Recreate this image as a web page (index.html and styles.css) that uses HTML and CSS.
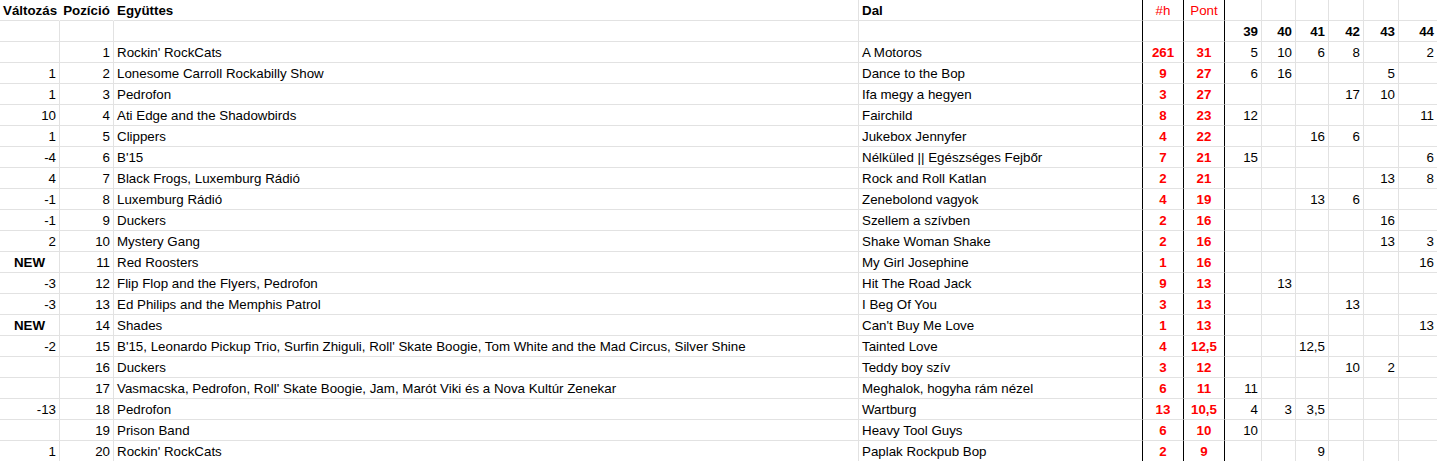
FILE: index.html
```html
<!DOCTYPE html>
<html lang="hu">
<head>
<meta charset="utf-8">
<title>Toplista</title>
<link rel="stylesheet" href="styles.css">
</head>
<body>
<table class="sheet">
  <colgroup>
    <col class="w-chg"><col class="w-pos"><col class="w-band"><col class="w-song">
    <col class="w-h"><col class="w-pont">
    <col class="w-39"><col class="w-40"><col class="w-41"><col class="w-42"><col class="w-43"><col class="w-44">
  </colgroup>
  <thead>
    <tr class="head">
      <th class="c nob">Változás</th>
      <th class="c nob">Pozíció</th>
      <th class="l">Együttes</th>
      <th class="l thick">Dal</th>
      <th class="red thin thick">#h</th>
      <th class="red thin thick">Pont</th>
      <th></th><th></th><th></th><th></th><th></th><th class="last"></th>
    </tr>
    <tr>
      <td></td><td></td><td></td><td class="thick"></td><td class="thick"></td><td class="thick"></td>
      <th class="r">39</th><th class="r">40</th><th class="r">41</th><th class="r">42</th><th class="r">43</th><th class="r last">44</th>
    </tr>
  </thead>
  <tbody>
    <tr><td class="r"></td><td class="r">1</td><td>Rockin' RockCats</td><td class="thick">A Motoros</td><td class="pt thick">261</td><td class="pt thick">31</td><td class="r">5</td><td class="r">10</td><td class="r">6</td><td class="r">8</td><td class="r"></td><td class="r last">2</td></tr>
    <tr><td class="r">1</td><td class="r">2</td><td>Lonesome Carroll Rockabilly Show</td><td class="thick">Dance to the Bop</td><td class="pt thick">9</td><td class="pt thick">27</td><td class="r">6</td><td class="r">16</td><td class="r"></td><td class="r"></td><td class="r">5</td><td class="r last"></td></tr>
    <tr><td class="r">1</td><td class="r">3</td><td>Pedrofon</td><td class="thick">Ifa megy a hegyen</td><td class="pt thick">3</td><td class="pt thick">27</td><td class="r"></td><td class="r"></td><td class="r"></td><td class="r">17</td><td class="r">10</td><td class="r last"></td></tr>
    <tr><td class="r">10</td><td class="r">4</td><td>Ati Edge and the Shadowbirds</td><td class="thick">Fairchild</td><td class="pt thick">8</td><td class="pt thick">23</td><td class="r">12</td><td class="r"></td><td class="r"></td><td class="r"></td><td class="r"></td><td class="r last">11</td></tr>
    <tr><td class="r">1</td><td class="r">5</td><td>Clippers</td><td class="thick">Jukebox Jennyfer</td><td class="pt thick">4</td><td class="pt thick">22</td><td class="r"></td><td class="r"></td><td class="r">16</td><td class="r">6</td><td class="r"></td><td class="r last"></td></tr>
    <tr><td class="r">-4</td><td class="r">6</td><td>B'15</td><td class="thick">Nélküled || Egészséges Fejbőr</td><td class="pt thick">7</td><td class="pt thick">21</td><td class="r">15</td><td class="r"></td><td class="r"></td><td class="r"></td><td class="r"></td><td class="r last">6</td></tr>
    <tr><td class="r">4</td><td class="r">7</td><td>Black Frogs, Luxemburg Rádió</td><td class="thick">Rock and Roll Katlan</td><td class="pt thick">2</td><td class="pt thick">21</td><td class="r"></td><td class="r"></td><td class="r"></td><td class="r"></td><td class="r">13</td><td class="r last">8</td></tr>
    <tr><td class="r">-1</td><td class="r">8</td><td>Luxemburg Rádió</td><td class="thick">Zenebolond vagyok</td><td class="pt thick">4</td><td class="pt thick">19</td><td class="r"></td><td class="r"></td><td class="r">13</td><td class="r">6</td><td class="r"></td><td class="r last"></td></tr>
    <tr><td class="r">-1</td><td class="r">9</td><td>Duckers</td><td class="thick">Szellem a szívben</td><td class="pt thick">2</td><td class="pt thick">16</td><td class="r"></td><td class="r"></td><td class="r"></td><td class="r"></td><td class="r">16</td><td class="r last"></td></tr>
    <tr><td class="r">2</td><td class="r">10</td><td>Mystery Gang</td><td class="thick">Shake Woman Shake</td><td class="pt thick">2</td><td class="pt thick">16</td><td class="r"></td><td class="r"></td><td class="r"></td><td class="r"></td><td class="r">13</td><td class="r last">3</td></tr>
    <tr><td class="new">NEW</td><td class="r">11</td><td>Red Roosters</td><td class="thick">My Girl Josephine</td><td class="pt thick">1</td><td class="pt thick">16</td><td class="r"></td><td class="r"></td><td class="r"></td><td class="r"></td><td class="r"></td><td class="r last">16</td></tr>
    <tr><td class="r">-3</td><td class="r">12</td><td>Flip Flop and the Flyers, Pedrofon</td><td class="thick">Hit The Road Jack</td><td class="pt thick">9</td><td class="pt thick">13</td><td class="r"></td><td class="r">13</td><td class="r"></td><td class="r"></td><td class="r"></td><td class="r last"></td></tr>
    <tr><td class="r">-3</td><td class="r">13</td><td>Ed Philips and the Memphis Patrol</td><td class="thick">I Beg Of You</td><td class="pt thick">3</td><td class="pt thick">13</td><td class="r"></td><td class="r"></td><td class="r"></td><td class="r">13</td><td class="r"></td><td class="r last"></td></tr>
    <tr><td class="new">NEW</td><td class="r">14</td><td>Shades</td><td class="thick">Can't Buy Me Love</td><td class="pt thick">1</td><td class="pt thick">13</td><td class="r"></td><td class="r"></td><td class="r"></td><td class="r"></td><td class="r"></td><td class="r last">13</td></tr>
    <tr><td class="r">-2</td><td class="r">15</td><td>B'15, Leonardo Pickup Trio, Surfin Zhiguli, Roll' Skate Boogie, Tom White and the Mad Circus, Silver Shine</td><td class="thick">Tainted Love</td><td class="pt thick">4</td><td class="pt thick">12,5</td><td class="r"></td><td class="r"></td><td class="r">12,5</td><td class="r"></td><td class="r"></td><td class="r last"></td></tr>
    <tr><td class="r"></td><td class="r">16</td><td>Duckers</td><td class="thick">Teddy boy szív</td><td class="pt thick">3</td><td class="pt thick">12</td><td class="r"></td><td class="r"></td><td class="r"></td><td class="r">10</td><td class="r">2</td><td class="r last"></td></tr>
    <tr><td class="r"></td><td class="r">17</td><td>Vasmacska, Pedrofon, Roll' Skate Boogie, Jam, Marót Viki és a Nova Kultúr Zenekar</td><td class="thick">Meghalok, hogyha rám nézel</td><td class="pt thick">6</td><td class="pt thick">11</td><td class="r">11</td><td class="r"></td><td class="r"></td><td class="r"></td><td class="r"></td><td class="r last"></td></tr>
    <tr><td class="r">-13</td><td class="r">18</td><td>Pedrofon</td><td class="thick">Wartburg</td><td class="pt thick">13</td><td class="pt thick">10,5</td><td class="r">4</td><td class="r">3</td><td class="r">3,5</td><td class="r"></td><td class="r"></td><td class="r last"></td></tr>
    <tr><td class="r"></td><td class="r">19</td><td>Prison Band</td><td class="thick">Heavy Tool Guys</td><td class="pt thick">6</td><td class="pt thick">10</td><td class="r">10</td><td class="r"></td><td class="r"></td><td class="r"></td><td class="r"></td><td class="r last"></td></tr>
    <tr><td class="r">1</td><td class="r">20</td><td>Rockin' RockCats</td><td class="thick">Paplak Rockpub Bop</td><td class="pt thick">2</td><td class="pt thick">9</td><td class="r"></td><td class="r"></td><td class="r">9</td><td class="r"></td><td class="r"></td><td class="r last"></td></tr>
  </tbody>
</table>
</body>
</html>
```
FILE: styles.css
```css
html, body {
  margin: 0;
  padding: 0;
  background: #ffffff;
  overflow: hidden;
}

.sheet {
  border-collapse: separate;
  border-spacing: 0;
  table-layout: fixed;
  width: 1437px;
  font-family: "Liberation Sans", Arial, sans-serif;
  font-size: 10pt;
  color: #000000;
}

.w-chg { width: 60px; }
.w-pos { width: 54px; }
.w-band { width: 745px; }
.w-song { width: 284px; }
.w-h { width: 41px; }
.w-pont { width: 41px; }
.w-39 { width: 37px; }
.w-40 { width: 34px; }
.w-41 { width: 33px; }
.w-42 { width: 35px; }
.w-43 { width: 35px; }
.w-44 { width: 38px; }

.sheet th,
.sheet td {
  box-sizing: border-box;
  height: 21px;
  padding: 2px 3px 0 3px;
  line-height: 18px;
  border-right: 1px solid #e2e2e2;
  border-bottom: 1px solid #e2e2e2;
  text-align: left;
  white-space: nowrap;
  overflow: hidden;
  vertical-align: top;
  font-weight: normal;
}

.sheet th {
  font-weight: bold;
}

.sheet .nob {
  border-right-color: #ffffff;
}

.sheet .c { text-align: center; }
.sheet .l { text-align: left; }
.sheet .r { text-align: right; }

.sheet .thick {
  border-right: 1px solid #000000;
}

.sheet .last {
  border-right: none;
}

.sheet .red {
  color: #ff0000;
  text-align: center;
}

.sheet .thin {
  font-weight: normal;
}

.sheet .pt {
  color: #ff0000;
  font-weight: bold;
  text-align: center;
}

.sheet .new {
  font-weight: bold;
  text-align: center;
}
```
